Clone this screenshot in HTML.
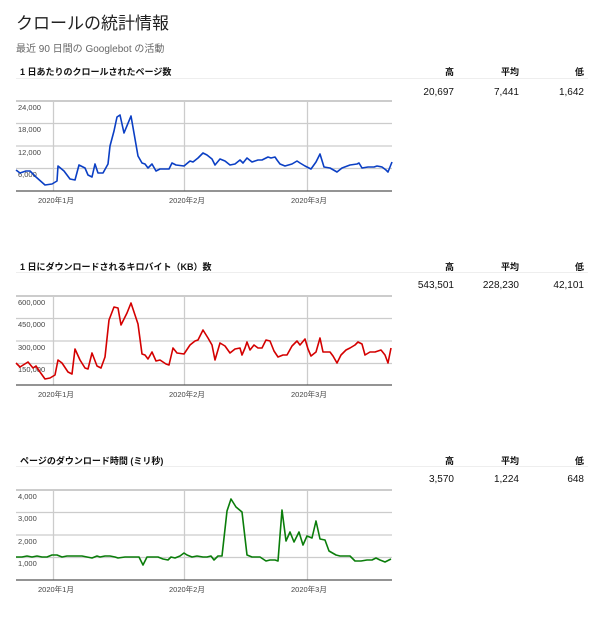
<!DOCTYPE html>
<html><head><meta charset="utf-8"><style>
body{margin:0;width:600px;height:617px;background:#fff;font-family:"Liberation Sans","Noto Sans CJK JP",sans-serif;position:relative;overflow:hidden;color:#222}
.a{position:absolute;white-space:nowrap}
.h{font-size:9px;font-weight:bold;color:#111}
.n{font-size:10px;color:#111;text-align:right;width:60px}
.sep{position:absolute;left:16px;width:572px;height:1px;background:#eee}
svg{position:absolute;left:0;top:0}
svg text{font-family:"Liberation Sans","Noto Sans CJK JP",sans-serif;font-size:7.5px;fill:#444}
</style></head><body>
<div class="a" style="left:16px;top:9px;font-size:17px;color:#222">クロールの統計情報</div>
<div class="a" style="left:16px;top:40px;font-size:10px;color:#666">最近 90 日間の Googlebot の活動</div>

<div class="a h" style="left:20px;top:65px">1 日あたりのクロールされたページ数</div>
<div class="sep" style="top:78px"></div>
<div class="a h" style="left:445px;top:65px">高</div>
<div class="a h" style="left:501px;top:65px">平均</div>
<div class="a h" style="left:575px;top:65px">低</div>
<div class="a n" style="left:394px;top:87px">20,697</div>
<div class="a n" style="left:459px;top:87px">7,441</div>
<div class="a n" style="left:524px;top:87px">1,642</div>

<div class="a h" style="left:20px;top:260px">1 日にダウンロードされるキロバイト（KB）数</div>
<div class="sep" style="top:272px"></div>
<div class="a h" style="left:445px;top:260px">高</div>
<div class="a h" style="left:501px;top:260px">平均</div>
<div class="a h" style="left:575px;top:260px">低</div>
<div class="a n" style="left:394px;top:280px">543,501</div>
<div class="a n" style="left:459px;top:280px">228,230</div>
<div class="a n" style="left:524px;top:280px">42,101</div>

<div class="a h" style="left:20px;top:454px">ページのダウンロード時間 (ミリ秒)</div>
<div class="sep" style="top:466px"></div>
<div class="a h" style="left:445px;top:454px">高</div>
<div class="a h" style="left:501px;top:454px">平均</div>
<div class="a h" style="left:575px;top:454px">低</div>
<div class="a n" style="left:394px;top:474px">3,570</div>
<div class="a n" style="left:459px;top:474px">1,224</div>
<div class="a n" style="left:524px;top:474px">648</div>

<svg width="600" height="617">
<g stroke="#ccc" stroke-width="1.3">
<line x1="16" y1="101" x2="392" y2="101" stroke-width="2"/><line x1="16" y1="123.5" x2="392" y2="123.5"/><line x1="16" y1="146" x2="392" y2="146"/><line x1="16" y1="168.5" x2="392" y2="168.5"/>
<line x1="53.5" y1="101" x2="53.5" y2="191"/><line x1="184.5" y1="101" x2="184.5" y2="191"/><line x1="307.5" y1="101" x2="307.5" y2="191"/>
<line x1="16" y1="296" x2="392" y2="296" stroke-width="2"/><line x1="16" y1="318.5" x2="392" y2="318.5"/><line x1="16" y1="341" x2="392" y2="341"/><line x1="16" y1="363.5" x2="392" y2="363.5"/>
<line x1="53.5" y1="296" x2="53.5" y2="385"/><line x1="184.5" y1="296" x2="184.5" y2="385"/><line x1="307.5" y1="296" x2="307.5" y2="385"/>
<line x1="16" y1="490" x2="392" y2="490" stroke-width="2"/><line x1="16" y1="512.5" x2="392" y2="512.5"/><line x1="16" y1="535" x2="392" y2="535"/><line x1="16" y1="557.5" x2="392" y2="557.5"/>
<line x1="53.5" y1="490" x2="53.5" y2="580"/><line x1="184.5" y1="490" x2="184.5" y2="580"/><line x1="307.5" y1="490" x2="307.5" y2="580"/>
</g>
<g stroke="#555" stroke-width="1.3"><line x1="16" y1="191" x2="392" y2="191"/><line x1="16" y1="385" x2="392" y2="385"/><line x1="16" y1="580" x2="392" y2="580"/></g>
<text x="18" y="110">24,000</text><text x="18" y="132">18,000</text><text x="18" y="155">12,000</text><text x="18" y="177">6,000</text>
<text x="18" y="305">600,000</text><text x="18" y="327">450,000</text><text x="18" y="350">300,000</text><text x="18" y="372">150,000</text>
<text x="18" y="499">4,000</text><text x="18" y="521">3,000</text><text x="18" y="544">2,000</text><text x="18" y="566">1,000</text>
<text x="38" y="203">2020年1月</text><text x="169" y="203">2020年2月</text><text x="291" y="203">2020年3月</text>
<text x="38" y="397">2020年1月</text><text x="169" y="397">2020年2月</text><text x="291" y="397">2020年3月</text>
<text x="38" y="592">2020年1月</text><text x="169" y="592">2020年2月</text><text x="291" y="592">2020年3月</text>
<polyline fill="none" stroke="#0b3fc4" stroke-width="1.6" stroke-linejoin="round" points="16,170 20,173 26,171 30,171 36,177 45,185 52,184 57,181 58,166 64,171 70,179 75,180 79,165 85,168 88,175 92,177 95,164 98,173 103,173 108,164 110,146 114,131 117,117 120,115 124,133 131,116 138,156 142,163 145,164 148,168 152,164 156,171 160,169 165,169 169,169 172,163 176,165 184,166 190,161 193,162 198,158 203,153 207,155 212,159 215,165 220,159 225,161 230,165 235,164 240,160 243,163 247,158 252,162 258,160 262,160 268,157 271,158 275,157 277,160 280,164 285,166 292,164 297,161 300,163 305,166 311,169 316,162 320,154 324,167 330,168 337,172 342,168 350,165 357,164 359,163 362,168 368,167 374,167 377,166 382,167 386,170 388,172 392,162"/>
<polyline fill="none" stroke="#d40000" stroke-width="1.6" stroke-linejoin="round" points="16,363 20,367 28,362 33,368 36,366 40,372 45,379 50,378 55,375 58,360 62,363 68,372 72,374 75,349 80,360 85,368 88,369 92,353 97,366 101,368 105,357 109,320 114,307 118,308 121,325 127,313 131,303 138,324 142,354 145,355 148,359 152,352 156,361 160,360 166,364 169,365 173,348 177,353 184,354 190,345 195,341 198,340 203,330 208,338 212,345 215,360 220,343 225,346 230,353 235,349 240,348 242,355 245,348 247,342 250,350 254,345 258,348 262,348 266,340 270,341 274,351 278,357 283,355 287,355 292,346 297,341 300,345 305,339 308,349 311,356 316,352 320,338 323,352 330,352 333,356 337,363 341,355 346,350 350,348 355,345 358,342 362,344 365,355 370,352 375,352 381,350 385,355 388,363 391,348"/>
<polyline fill="none" stroke="#0a7d0a" stroke-width="1.6" stroke-linejoin="round" points="16,557 22,557 27,556 32,557 37,556 42,557 47,557 52,555 57,555 62,557 67,556 72,556 77,556 82,556 87,557 92,558 97,556 100,557 105,556 110,556 115,557 118,558 125,557 130,557 135,557 139,557 143,565 147,557 152,557 158,557 163,559 168,560 171,557 175,558 180,556 184,553 187,555 192,557 197,556 203,557 207,557 211,556 214,560 218,556 222,556 227,511 231,499 236,507 242,512 247,555 252,557 260,557 263,559 266,561 270,560 275,560 278,561 282,510 286,541 290,532 294,542 299,532 303,545 307,536 312,538 316,521 320,539 325,540 329,551 336,555 340,556 344,556 350,556 355,561 361,561 367,560 372,560 376,558 380,560 385,562 391,559"/>
</svg>
</body></html>
